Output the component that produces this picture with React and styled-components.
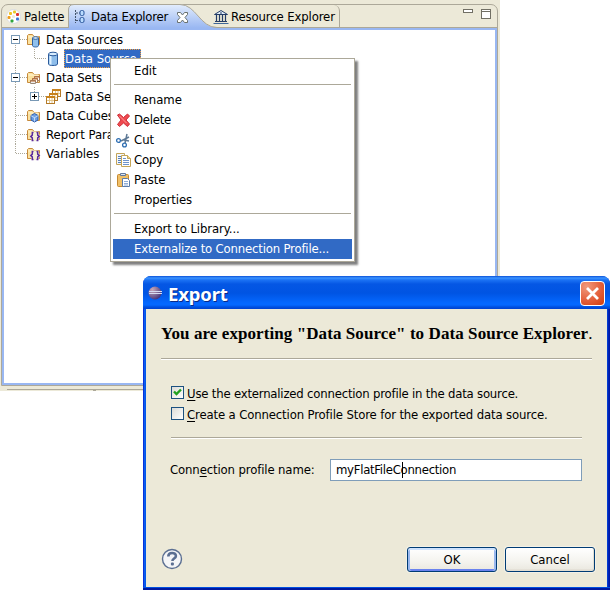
import React from 'react';
import styled, { createGlobalStyle } from 'styled-components';

const Global = createGlobalStyle`
  * { box-sizing: border-box; }
  html, body { margin: 0; background: #fff; overflow: hidden; }
  body { font: 13px "DejaVu Sans Condensed", "DejaVu Sans", "Noto Sans", sans-serif; font-stretch: condensed; color: #000; }
`;

const Desktop = styled.main`position: relative; width: 615px; height: 606px; overflow: hidden;`;
const Label = styled.span`
  white-space: pre; line-height: 18px; letter-spacing: ${p => p.$ls || 0}px;
  u { text-decoration: underline; text-underline-offset: 2px; text-decoration-thickness: 1px; }
`;
const Icon = styled.svg`display: block; flex: none; overflow: visible;`;

/* explorer view */
const Explorer = styled.section`
  width: 500px; height: 391px; background: #ece9d8; padding: 4px 2px 0 1px;
  display: flex; flex-direction: column;
`;
const View = styled.div`
  height: 382px; display: flex; flex-direction: column;
  border: 1px solid #aca899; border-radius: 7px 7px 0 0;
`;
const TabBar = styled.header`display: flex; height: 23px; border-bottom: 1px solid #aca899; flex: none;`;
const Tab = styled.div`
  display: flex; align-items: center; height: 22px; padding-left: ${p => p.$pad}px; gap: ${p => p.$gap}px;
  width: ${p => p.$w}px; padding-top: 1px; flex: none;
  border-right: ${p => (p.$edge ? '1px solid #aca899' : '0')};
  border-top-right-radius: ${p => (p.$edge ? '6px' : '0')};
`;
const ActiveTab = styled(Tab)`position: relative; height: 23px; isolation: isolate; padding-bottom: 1px;`;
const TabShape = styled.svg`position: absolute; left: 0; top: -1px; z-index: -1;`;
const Controls = styled.div`margin-left: auto; display: flex; gap: 8px; padding: 4px 6px 0 0;`;
const Minimize = styled.div`width: 10px; height: 4px; border: 1px solid #716f64; background: #fff;`;
const Maximize = styled.div`width: 10px; height: 10px; border: 1px solid #716f64; background: linear-gradient(#fff 1px, #716f64 1px, #716f64 2px, #fff 2px);`;
const Tree = styled.div`
  flex: 1; background: #fff; border: 2px solid #99b7f2;
  display: flex; flex-direction: column;
`;
const Row = styled.div`display: flex; align-items: center; height: 19px;`;
const Branch = styled.svg`display: block; flex: none;`;
const NodeIcon = styled.div`width: 16px; flex: none; margin-right: ${p => p.$gap}px;`;
const Selected = styled.div`
  background: #316ac5; color: #fff; height: 19px; width: 77px; padding-left: 1px; outline: 1px dotted #f0a040; outline-offset: -1px;
  display: flex; align-items: center;
`;
const NextPane = styled.div`margin: 3px -2px 0 6px; height: 2px; border-top: 1px solid #aca899; display: flex; padding-left: 86px;
  &::before { content: ''; width: 3px; height: 1px; background: #aca899; }
`;

/* context menu */
const Menu = styled.nav`
  position: absolute; left: 110px; top: 58px; width: 245px; height: 204px; padding: 2px;
  background: #fff; border: 1px solid #aca899; box-shadow: 3px 3px 2px rgba(0,0,0,.5);
`;
const MenuItem = styled.div`
  height: 20px; display: flex; align-items: center; padding-left: 3px;
  color: ${p => (p.$active ? '#fff' : '#000')}; background: ${p => (p.$active ? '#316ac5' : 'transparent')};
`;
const MenuIcon = styled.div`width: 18px; height: 16px; flex: none;`;
const MenuRule = styled.div`height: 9px; padding: 3px 1px 0; &::before { content: ''; display: block; height: 1px; background: #aca899; }`;

/* dialog */
const Dialog = styled.section`
  position: absolute; left: 143px; top: 276px; width: 467px; height: 314px;
  border-radius: 8px 8px 0 0; padding: 0 3px 3px; overflow: hidden; display: flex; flex-direction: column;
  background: linear-gradient(90deg, #0831d9 1px, #0f5ff5 1px, #0055e5 3px, #0055e5 464px, #0445dd 464px, #0018a8 466px);
  box-shadow: inset 0 -2px #0018a0, inset 0 -3px #0050e0;
`;
const TitleBar = styled.header`
  height: 33px; flex: none; margin: 0 -3px; padding: 2px 5px 0 5px; display: flex; align-items: center;
  background: linear-gradient(#0a50d8 0, #3b94ff 2px, #1b72f4 4px, #0557e4 8px, #0054e3 17px, #0468ff 27px, #0468ff 29px, #0050e0 31px, #0042cf 33px);
`;
const Title = styled.h1`
  margin: 0 auto 0 5px; color: #fff; font: bold 18.5px/28px "Noto Sans", sans-serif; letter-spacing: ${p => p.$ls}px;
  text-shadow: 1px 1px #0a2a88;
`;
const CloseButton = styled.button`
  width: 25px; height: 25px; border: 1px solid #fff; border-radius: 4px; padding: 0; display: grid; place-items: center;
  background: radial-gradient(circle at 25% 20%, #f0997c, #e4603c 55%, #d13c0c);
`;
const Body = styled.div`flex: 1; background: #ece9d8; padding: 16px 15px 15px 15px; display: flex; flex-direction: column;`;
const Heading = styled.h2`
  margin: 0 0 15px; height: 18px; font: bold 17px/18px "Liberation Serif", serif; white-space: pre; letter-spacing: ${p => p.$ls}px;
  span { font-weight: normal; }
`;
const Rule = styled.hr`
  width: 100%; height: 2px; margin: 0; border: 0; border-top: 1px solid #aca899; border-bottom: 1px solid #fff; flex: none;
`;
const Form = styled.div`padding: 23px 10px 0; display: flex; flex-direction: column;`;
const CheckRow = styled.label`display: flex; align-items: center; height: 21px; gap: 3px;`;
const Check = styled.span`
  width: 13px; height: 13px; border: 1px solid #1c5180; background: linear-gradient(135deg, #dcdcd7, #fff); display: grid; place-items: center;
  margin-bottom: 2px;
`;
const Section = styled.div`margin-top: 12px;`;
const Field = styled.div`display: flex; align-items: center; margin: 20px 0 0 -1px; justify-content: space-between;`;
const TextBox = styled.div`
  position: relative; width: 252px; height: 22px; background: #fff; border: 1px solid #7f9db9; padding-left: 5px; display: flex; align-items: center;
`;
const Caret = styled.i`position: absolute; left: 71px; top: 2px; width: 1px; height: 16px; background: #000;`;
const Actions = styled.footer`display: flex; align-items: center; margin: auto -3px 0 1px; gap: 8px;`;
const Help = styled.div`margin-right: auto;`;
const Button = styled.button`
  width: 90px; height: 25px; border: 1px solid #003c74; border-radius: 3px; padding: 0; font: inherit; color: #000;
  background: linear-gradient(#fff, #f4f3ee 60%, #eceae2 90%, #d8d0c4);
  box-shadow: ${p => (p.$primary
    ? 'inset 0 2px #cee2fd, inset 2px 0 #9ab8ee, inset -2px 0 #9ab8ee, inset 0 -2px #6982ee'
    : 'inset -1px -1px #e2ded2')}, 0 0 0 1px #f3f1e7;
`;

const Svg = ({ s = 16, children }) => <Icon width={s} height={s} viewBox={`0 0 ${s} ${s}`}>{children}</Icon>;

const Folder = () => (
  <path d="M.5 12.500v-9l1-1h4l1.500 2h5.500v8z" fill="#fbe2a0" stroke="#c78a3b" />
);
const FolderBox = ({ children }) => <Svg><Folder /><path d="M1.500 5h10" stroke="#fff6d8" />{children}</Svg>;
const Cylinder = () => (
  <g stroke="#30609e">
    <path d="M5.500 6v7.500c0 2 6 2 6 0V6" fill="#8fc0ec" /><ellipse cx="8.500" cy="6" rx="3" ry="1.300" fill="#ddf0ff" />
  </g>
);
const DataFolder = () => <FolderBox><Cylinder /></FolderBox>;
const Database = () => (
  <Svg><path d="M2.500 3v10c0 2 9 2 9 0V3" fill="#8ebdea" stroke="#2b5a9b" /><path d="M4.500 4v9.500" stroke="#dff1ff" strokeWidth="2" />
    <ellipse cx="7" cy="3" rx="4.500" ry="1.800" fill="#d8edff" stroke="#2b5a9b" /></Svg>
);
const SetsFolder = () => (
  <FolderBox>
    <path d="M7.500 6.500h5v4h-5z" fill="#fff" stroke="#a88060" /><path d="M7 7h6" stroke="#b86428" />
    <path d="M5.500 8.500h5v4h-5z" fill="#fff" stroke="#a88060" /><path d="M5 9h6" stroke="#b86428" />
    <path d="M3.500 10.500h5v3h-5z" fill="#eee" stroke="#9a8a78" /><path d="M3 11h6" stroke="#b86428" />
  </FolderBox>
);
const DataSet = () => (
  <Svg>
    {[[6, 0], [3, 4], [0, 7]].map(([x, y]) => (
      <g key={x}><rect x={x + .5} y={y + .5} width="8" height="7" fill="#fff" stroke="#b47a28" />
        <path d={`M${x} ${y + 1}h9`} stroke="#c8821e" strokeWidth="2" />
        <path d={`M${x + 1} ${y + 4.5}h7M${x + 3.5} ${y + 2}v5M${x + 6} ${y + 2}v5`} stroke="#e3c68c" /></g>
    ))}
  </Svg>
);
const CubeFolder = () => (
  <FolderBox><path d="M7.500 5.500l3.500 2v4.500l-3.500 2-3.500-2V7.500z" fill="#6b9de2" stroke="#2b5db0" />
    <path d="M4 7.700l3.500 2 3.500-2M7.500 9.500v4" fill="none" stroke="#d6e8ff" strokeWidth=".8" /></FolderBox>
);
const BraceFolder = () => (
  <FolderBox><circle cx="8" cy="9.500" r="4.800" fill="#f5eed8" />
    <path d="M6.500 5.500H5.300v2.600L3.800 9.500l1.500 1.400v2.600H6.500M9.500 5.500h1.200v2.600l1.500 1.400-1.500 1.400v2.600H9.500" fill="none" stroke="#5b2a9b" strokeWidth="1.500" />
  </FolderBox>
);
const PaletteIcon = () => (
  <Svg><circle cx="7.500" cy="7.500" r="7" fill="#fff" stroke="#dadde0" />
    {[['#e0322c', 11.5, 5.5], ['#f0c320', 4.5, 4.5], ['#f0a020', 3, 8.5], ['#2fa53a', 6, 12], ['#3a78d6', 11.5, 10], ['#e9c928', 8.5, 3]].map(([f, x, y]) => <rect key={f} x={x - 1.5} y={y - 1.5} width="3" height="3" rx="1" fill={f} />)}
    <circle cx="7.500" cy="7.500" r="1.600" fill="#ece9d8" /></Svg>
);
const ExplorerIcon = () => (
  <Svg><path d="M1.500 1v13M2 4h4M2 11.500h4" stroke="#44546c" strokeDasharray="2 1" fill="none" />
    <g fill="#b9dbff" stroke="#28559c"><rect x="6" y="1.500" width="4" height="5" rx="1.500" /><rect x="6" y="8.500" width="4" height="5" rx="1.500" /></g></Svg>
);
const Museum = () => (
  <Svg><path d="M1.500 5.500L8 1.500l6.500 4z" fill="#e3effa" stroke="#243c66" /><path d="M7 4h2M3.500 6v7M6.500 6v7M9.500 6v7M12.500 6v7M2 12.500h12" stroke="#243c66" strokeWidth="1.200" />
    <path d="M.5 14.500h15" stroke="#3f6697" /></Svg>
);
const TabClose = () => (
  <Svg s={11}><path d="M.5.500h3l2 2.500 2-2.500h3v2L8 5.500l2.500 3v2h-3l-2-2.500-2 2.500h-3v-2L3 5.500l-2.500-3z" fill="#fff" stroke="#69716f" /></Svg>
);
const Delete = () => (
  <Svg><path d="M1.500 3l2-1 4 3.500L11.500 2l2 2-3.500 4 3.500 4-2 2.500L7.500 11l-4 3.500-2-2L5 8z" fill="#ee4a50" stroke="#cf3038" /><path d="M3.500 4l7 7" stroke="#ff9a97" /></Svg>
);
const Cut = () => (
  <Svg><path d="M5 9l8-4M9 11L11 2M8 8l5 1" stroke="#5d7895" strokeWidth="1.500" /><g fill="#fff" stroke="#2e6eb2" strokeWidth="1.300"><circle cx="2.500" cy="8.500" r="1.900" /><circle cx="8.500" cy="13" r="1.900" /></g></Svg>
);
const Copy = () => (
  <Svg><path d="M.5 1.500h8v11h-8z" fill="#f3f6fc" stroke="#c4a558" /><path d="M2 4.500h3M2 6.500h3M2 8.500h3M2 10.500h3" stroke="#5780b8" />
    <path d="M5.500 3.500h6l3 3v8h-9z" fill="#fff" stroke="#c4a558" /><path d="M7 6.500h3M7 8.500h6M7 10.500h6M7 12.500h6" stroke="#6e94cc" /><path d="M11.500 3.500v3h3" fill="#f2d98c" stroke="#c4a558" /></Svg>
);
const Paste = () => (
  <Svg><rect x="1.500" y="2.500" width="11" height="12" rx="1" fill="#f0c068" stroke="#c58930" /><path d="M4.500 3.500v-2h5v2z" fill="#dbe6f2" stroke="#63799b" />
    <path d="M6.500 6.500h5l2 2v6h-7z" fill="#fff" stroke="#5b7cab" /><path d="M8 9.500h4M8 11.500h4M8 13h4" stroke="#8fadd8" /></Svg>
);
const Eclipse = () => (
  <Svg s={15}><defs><radialGradient id="ecl" cx=".3" cy=".25" r=".8"><stop offset="0" stopColor="#c9a9b8" /><stop offset="1" stopColor="#43357c" /></radialGradient></defs>
    <circle cx="7" cy="7" r="6.500" fill="url(#ecl)" /><path d="M1 5.500h13M1 7.500h13" stroke="#d6dcf2" /></Svg>
);
const HelpIcon = () => (
  <Svg s={21}><circle cx="10" cy="10" r="9.500" fill="#f4f5f7" stroke="#5b6f92" strokeWidth="1.400" />
    <path d="M6.300 7.500c0-4.700 7.600-4.500 7.600-.6 0 2.600-3.500 2.600-3.500 5" fill="none" stroke="#5b6f92" strokeWidth="2.600" /><rect x="8.900" y="13.500" width="3" height="3" rx="1" fill="#5b6f92" /></Svg>
);

const dash = { stroke: '#aca899', strokeDasharray: '1 1', fill: 'none' };
function Lines({ depth = 0, box, first, last, stem }) {
  const bx = depth ? 26 : 7;
  return (
    <Branch width={depth ? 42 : 23} height="19">
      {stem && <path d="M11.500 0v19" {...dash} />}
      {!depth && <path d={`M11.500 ${first ? 9 : 0}V${last ? 10 : 19}M12 9.500h12`} {...dash} />}
      {depth > 0 && <path d="M30.500 0V10M31 9.500h11" {...dash} />}
      {box && (
        <g><rect x={bx + .5} y="5.500" width="8" height="8" fill="#fff" stroke="#7898b5" />
          <path d={`M${bx + 2} 9.500h5${box === '+' ? `M${bx + 4.5} 7v5` : ''}`} stroke="#000" /></g>
      )}
    </Branch>
  );
}

const nodes = [
  { text: 'Data Sources', icon: DataFolder, box: '-', first: true, ls: -0.08 },
  { text: 'Data Source', icon: Database, depth: 1, stem: true, selected: true },
  { text: 'Data Sets', icon: SetsFolder, box: '-', ls: -0.1 },
  { text: 'Data Se', icon: DataSet, depth: 1, stem: true, box: '+' },
  { text: 'Data Cubes', icon: CubeFolder },
  { text: 'Report Para', icon: BraceFolder },
  { text: 'Variables', icon: BraceFolder, last: true },
];

const menu = [
  { text: 'Edit' }, null, { text: 'Rename' }, { text: 'Delete', icon: Delete, ls: -0.25 }, { text: 'Cut', icon: Cut },
  { text: 'Copy', icon: Copy, ls: -0.2 }, { text: 'Paste', icon: Paste }, { text: 'Properties', ls: -0.1 }, null,
  { text: 'Export to Library...', ls: -0.1 }, { text: 'Externalize to Connection Profile...', active: true, ls: -0.18 },
];

export default function App() {
  return (
    <>
      <Global />
      <Desktop>
        <Explorer>
          <View>
            <TabBar>
              <Tab $w={66} $pad={4} $gap={2}><PaletteIcon /><Label>Palette</Label></Tab>
              <ActiveTab $w={141} $pad={6} $gap={1}>
                <TabShape width="150" height="24" viewBox="0 0 150 24">
                  <defs><linearGradient id="tab" x2="0" y2="1"><stop stopColor="#e3edfd" /><stop offset="1" stopColor="#99b7f2" /></linearGradient></defs>
                  <path d="M.5 24V6Q.5.500 6 .500H112C128 .500 132 23.500 149 23.500V24z" fill="url(#tab)" />
                  <path d="M.5 24V6Q.5.500 6 .500H112C128 .500 132 23.500 149 23.500" fill="none" stroke="#aca899" />
                </TabShape>
                <ExplorerIcon /><Label $ls={-0.25}>Data Explorer</Label><Tab $pad={8} $gap={0} $w={20}><TabClose /></Tab>
              </ActiveTab>
              <Tab $w={131} $pad={4} $gap={2} $edge><Museum /><Label $ls={-0.12}>Resource Explorer</Label></Tab>
              <Controls><Minimize /><Maximize /></Controls>
            </TabBar>
            <Tree>
              {nodes.map(({ text, icon: I, selected, ls, ...lines }) => (
                <Row key={text}>
                  <Lines {...lines} />
                  <NodeIcon $gap={selected ? 2 : 3}><I /></NodeIcon>
                  {selected ? <Selected><Label $ls={ls}>{text}</Label></Selected> : <Label $ls={ls}>{text}</Label>}
                </Row>
              ))}
            </Tree>
          </View>
          <NextPane />
        </Explorer>

        <Menu>
          {menu.map((m, i) => m
            ? <MenuItem key={i} $active={m.active}><MenuIcon>{m.icon && <m.icon />}</MenuIcon><Label $ls={m.ls}>{m.text}</Label></MenuItem>
            : <MenuRule key={i} />)}
        </Menu>

        <Dialog>
          <TitleBar>
            <Eclipse /><Title $ls={-0.15}>Export</Title>
            <CloseButton><Svg s={15}><path d="M2 2l11 11M13 2L2 13" stroke="#fff" strokeWidth="2.800" /></Svg></CloseButton>
          </TitleBar>
          <Body>
            <Heading $ls={0.08}>You are exporting "Data Source" to Data Source Explorer<span>.</span></Heading>
            <Rule />
            <Form>
              <CheckRow><Check><Svg s={9}><path d="M1 3.500l2.500 2.500L8 1.500" fill="none" stroke="#21a121" strokeWidth="2.400" /></Svg></Check><Label $ls={-0.2}><u>U</u>se the externalized connection profile in the data source.</Label></CheckRow>
              <CheckRow><Check /><Label $ls={-0.14}><u>C</u>reate a Connection Profile Store for the exported data source.</Label></CheckRow>
              <Section><Rule /></Section>
              <Field><Label $ls={-0.13}>Conn<u>e</u>ction profile name:</Label><TextBox><Label $ls={-0.28}>myFlatFileConnection</Label><Caret /></TextBox></Field>
            </Form>
            <Actions><Help><HelpIcon /></Help><Button $primary>OK</Button><Button>Cancel</Button></Actions>
          </Body>
        </Dialog>
      </Desktop>
    </>
  );
}
